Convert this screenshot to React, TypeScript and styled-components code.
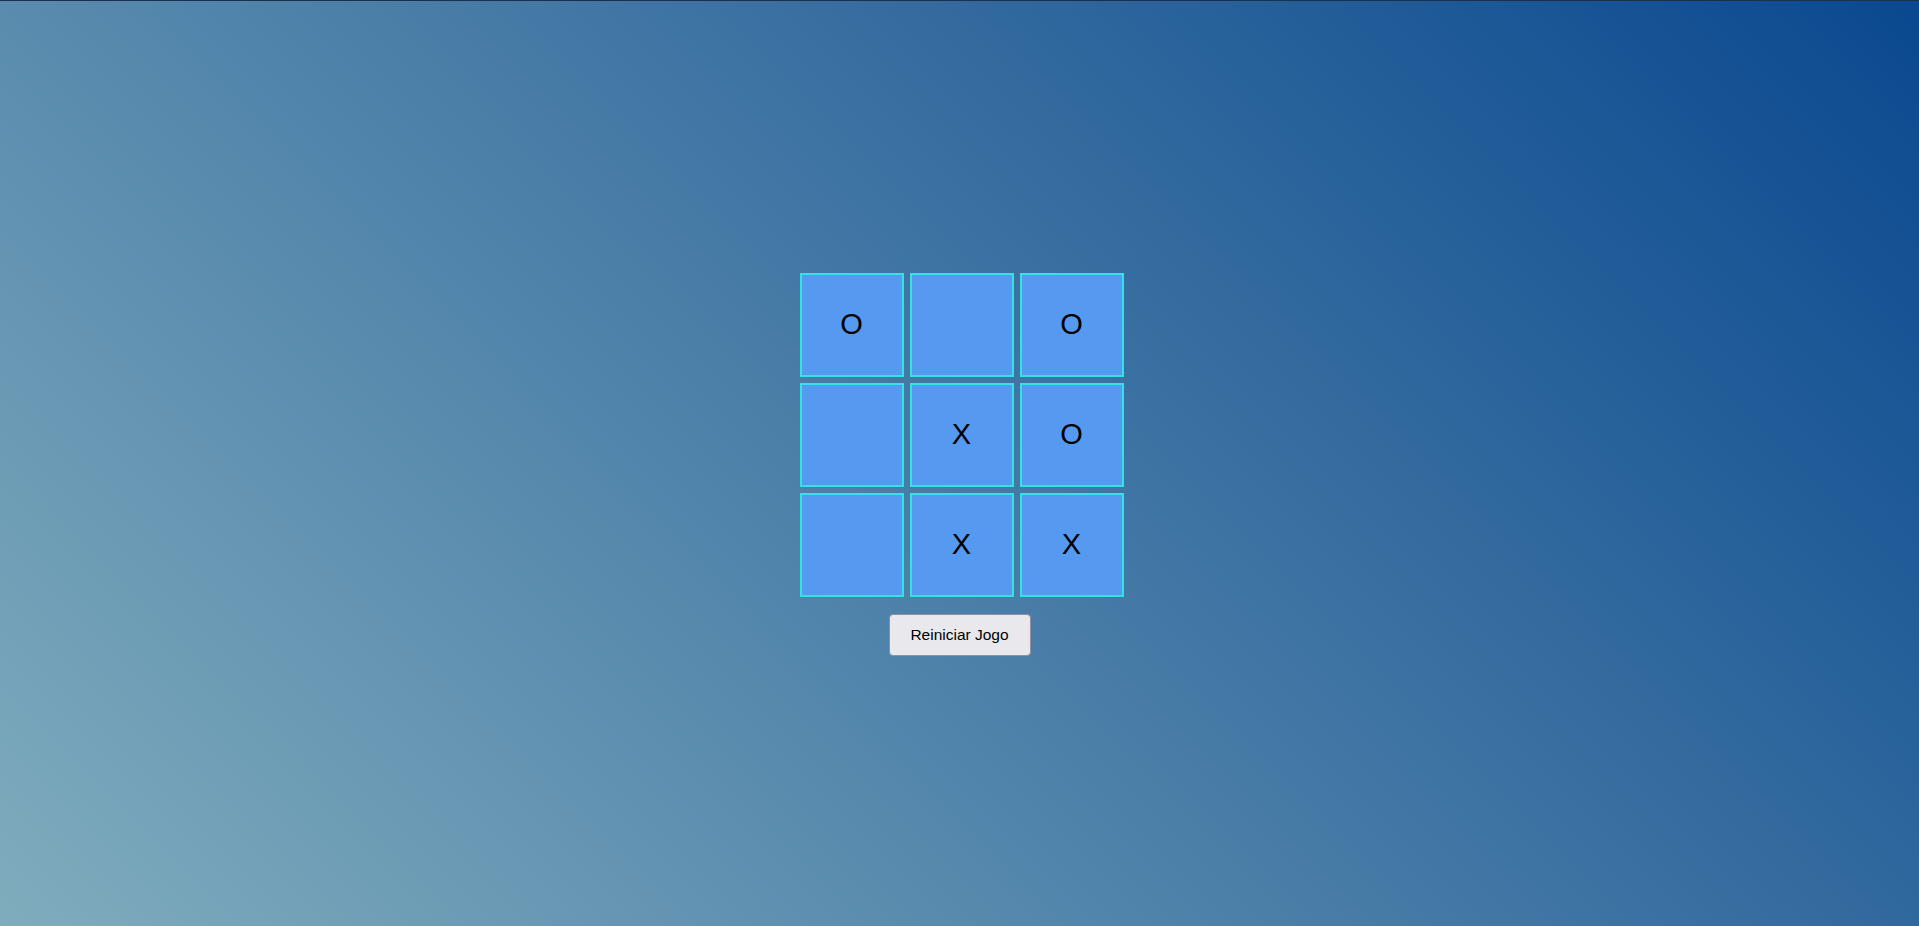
import React, { useState } from "react";
import styled, { createGlobalStyle } from "styled-components";

const GlobalStyle = createGlobalStyle`
  html, body { margin: 0; padding: 0; }
  body { font-family: "Liberation Sans", Arial, sans-serif; }
`;

const Page = styled.div`
  box-sizing: border-box;
  min-height: 100vh;
  border-top: 1px solid #1c2f4d;
  background: linear-gradient(45deg, #80acbd 0%, #0a488f 100%);
  display: flex;
  flex-direction: column;
  align-items: center;
  justify-content: center;
`;

const Board = styled.div`
  display: grid;
  grid-template-columns: repeat(3, 104px);
  gap: 6px;
  padding: 2px 3px 4px 7px;
`;

const Cell = styled.button`
  box-sizing: border-box;
  width: 104px;
  height: 104px;
  margin: 0;
  padding: 0 0 1px;
  border: 2px solid #33e3e3;
  border-radius: 0;
  background: #5599f1;
  color: #000;
  font-family: "Liberation Sans", Arial, sans-serif;
  font-size: 29px;
  display: flex;
  align-items: center;
  justify-content: center;
  cursor: pointer;
`;

const ResetButton = styled.button`
  box-sizing: border-box;
  margin-top: 13px;
  width: 142px;
  height: 42px;
  padding: 0;
  border: 1px solid #8f8f9d;
  border-radius: 4px;
  background: #e9e9ed;
  color: #000;
  font-family: "Liberation Sans", Arial, sans-serif;
  font-size: 15.5px;
  cursor: pointer;
`;

const initial = ["O", "", "O", "", "X", "O", "", "X", "X"];

export default function App() {
  const [cells, setCells] = useState<string[]>(initial);
  return (
    <>
      <GlobalStyle />
      <Page>
        <Board>
          {cells.map((c, i) => (
            <Cell key={i}>{c}</Cell>
          ))}
        </Board>
        <ResetButton onClick={() => setCells(Array(9).fill(""))}>Reiniciar Jogo</ResetButton>
      </Page>
    </>
  );
}
